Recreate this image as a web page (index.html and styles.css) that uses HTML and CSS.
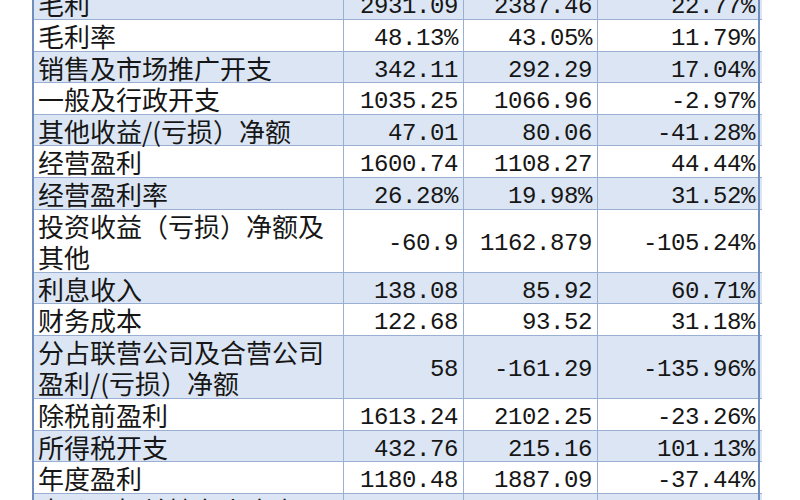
FILE: index.html
```html
<!DOCTYPE html>
<html lang="zh-CN">
<head>
<meta charset="utf-8">
<title>财务摘要</title>
<link rel="stylesheet" href="styles.css">
</head>
<body>
<div class="sheet">
  <div class="row alt"><div class="label">毛利</div><div class="num">2931.09</div><div class="num">2387.46</div><div class="num last">22.77%</div></div>
  <div class="row"><div class="label">毛利率</div><div class="num">48.13%</div><div class="num">43.05%</div><div class="num last">11.79%</div></div>
  <div class="row alt"><div class="label">销售及市场推广开支</div><div class="num">342.11</div><div class="num">292.29</div><div class="num last">17.04%</div></div>
  <div class="row"><div class="label">一般及行政开支</div><div class="num">1035.25</div><div class="num">1066.96</div><div class="num last">-2.97%</div></div>
  <div class="row alt"><div class="label">其他收益/(亏损）净额</div><div class="num">47.01</div><div class="num">80.06</div><div class="num last">-41.28%</div></div>
  <div class="row"><div class="label">经营盈利</div><div class="num">1600.74</div><div class="num">1108.27</div><div class="num last">44.44%</div></div>
  <div class="row alt"><div class="label">经营盈利率</div><div class="num">26.28%</div><div class="num">19.98%</div><div class="num last">31.52%</div></div>
  <div class="row double"><div class="label">投资收益（亏损）净额及<br>其他</div><div class="num">-60.9</div><div class="num">1162.879</div><div class="num last">-105.24%</div></div>
  <div class="row alt"><div class="label">利息收入</div><div class="num">138.08</div><div class="num">85.92</div><div class="num last">60.71%</div></div>
  <div class="row"><div class="label">财务成本</div><div class="num">122.68</div><div class="num">93.52</div><div class="num last">31.18%</div></div>
  <div class="row alt double"><div class="label">分占联营公司及合营公司<br>盈利/(亏损）净额</div><div class="num">58</div><div class="num">-161.29</div><div class="num last">-135.96%</div></div>
  <div class="row"><div class="label">除税前盈利</div><div class="num">1613.24</div><div class="num">2102.25</div><div class="num last">-23.26%</div></div>
  <div class="row alt"><div class="label">所得税开支</div><div class="num">432.76</div><div class="num">215.16</div><div class="num last">101.13%</div></div>
  <div class="row"><div class="label">年度盈利</div><div class="num">1180.48</div><div class="num">1887.09</div><div class="num last">-37.44%</div></div>
  <div class="row alt"><div class="label">本公司权益持有人应占</div><div class="num">1128.02</div><div class="num">1894.53</div><div class="num last">-40.46%</div></div>
</div>
</body>
</html>
```
FILE: styles.css
```css
html, body {
  margin: 0;
  padding: 0;
  background: #ffffff;
  overflow: hidden;
}

.sheet {
  margin: -11.6px 0 0 32px;
  width: 728px;
  border-left: 2px solid #6f8dbd;
  color: #161616;
}

.row {
  display: grid;
  grid-template-columns: 310px 120px 134px 162px;
  height: 31.6px;
  box-sizing: border-box;
  border-bottom: 1px solid #9ab0d2;
  background: #ffffff;
}

.row.alt {
  background: #dbe5f3;
}

.row.double {
  height: 63.2px;
}

.label,
.num {
  box-sizing: border-box;
  border-right: 1px solid #9ab0d2;
  display: flex;
  align-items: center;
  white-space: nowrap;
}

.label {
  font-family: "Noto Sans CJK SC", sans-serif;
  font-size: 26px;
  line-height: 31px;
  padding-left: 4px;
  padding-bottom: 5px;
}

.num {
  font-family: "Liberation Mono", monospace;
  font-size: 24px;
  letter-spacing: -0.4px;
  justify-content: flex-end;
  padding-right: 5px;
  padding-top: 1px;
}

.num.last {
  border-right: 2px solid #6f8dbd;
  padding-right: 3px;
}
```
